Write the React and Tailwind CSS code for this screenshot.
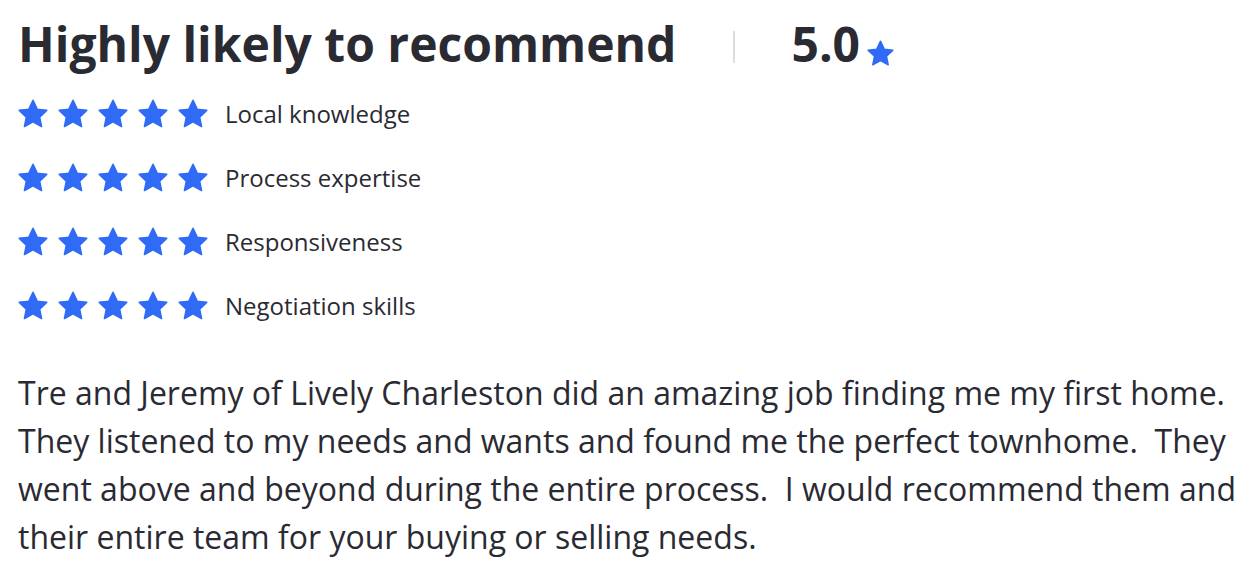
const Star = ({ size = 32 }) => (
  <svg width={size} height={size} viewBox="0 0 24 24" fill="#2f6bf5">
    <path d="M12 1.8l3.1 6.6 7.2.9-5.3 5 1.4 7.1L12 17.9l-6.4 3.5 1.4-7.1-5.3-5 7.2-.9z" strokeLinejoin="round" stroke="#2f6bf5" strokeWidth="1.2" />
  </svg>
);

const ratings = ["Local knowledge", "Process expertise", "Responsiveness", "Negotiation skills"];

export default function App() {
  return (
    <div className="bg-white px-[18px] pt-[12px] text-[#2a2a33]" style={{ fontFamily: '"Open Sans", sans-serif' }}>
      <div className="flex items-center">
        <h1 className="text-[48px] font-bold leading-[64px]">Highly likely to recommend</h1>
        <div className="ml-[57px] mr-[56px] mt-[6px] h-[32px] w-[2px] bg-[#dcdce2]"></div>
        <div className="flex items-end">
          <span className="text-[48px] font-bold leading-[64px]">5.0</span>
          <span className="mb-[8px] ml-[6px]"><Star size={29} /></span>
        </div>
      </div>
      <div className="mt-[22px] flex flex-col gap-[32px]">
        {ratings.map((r) => (
          <div key={r} className="flex h-[32px] items-center">
            <div className="-ml-[1px] flex gap-[8px]">
              {[0, 1, 2, 3, 4].map((i) => (
                <Star key={i} />
              ))}
            </div>
            <span className="ml-[16px] text-[24px]">{r}</span>
          </div>
        ))}
      </div>
      <p className="mt-[47px] whitespace-nowrap text-[32px] leading-[48px]">
        Tre and Jeremy of Lively Charleston did an amazing job finding me my first home.
        <br />
        They listened to my needs and wants and found me the perfect townhome.&nbsp; They
        <br />
        went above and beyond during the entire process.&nbsp; I would recommend them and
        <br />
        their entire team for your buying or selling needs.
      </p>
    </div>
  );
}
